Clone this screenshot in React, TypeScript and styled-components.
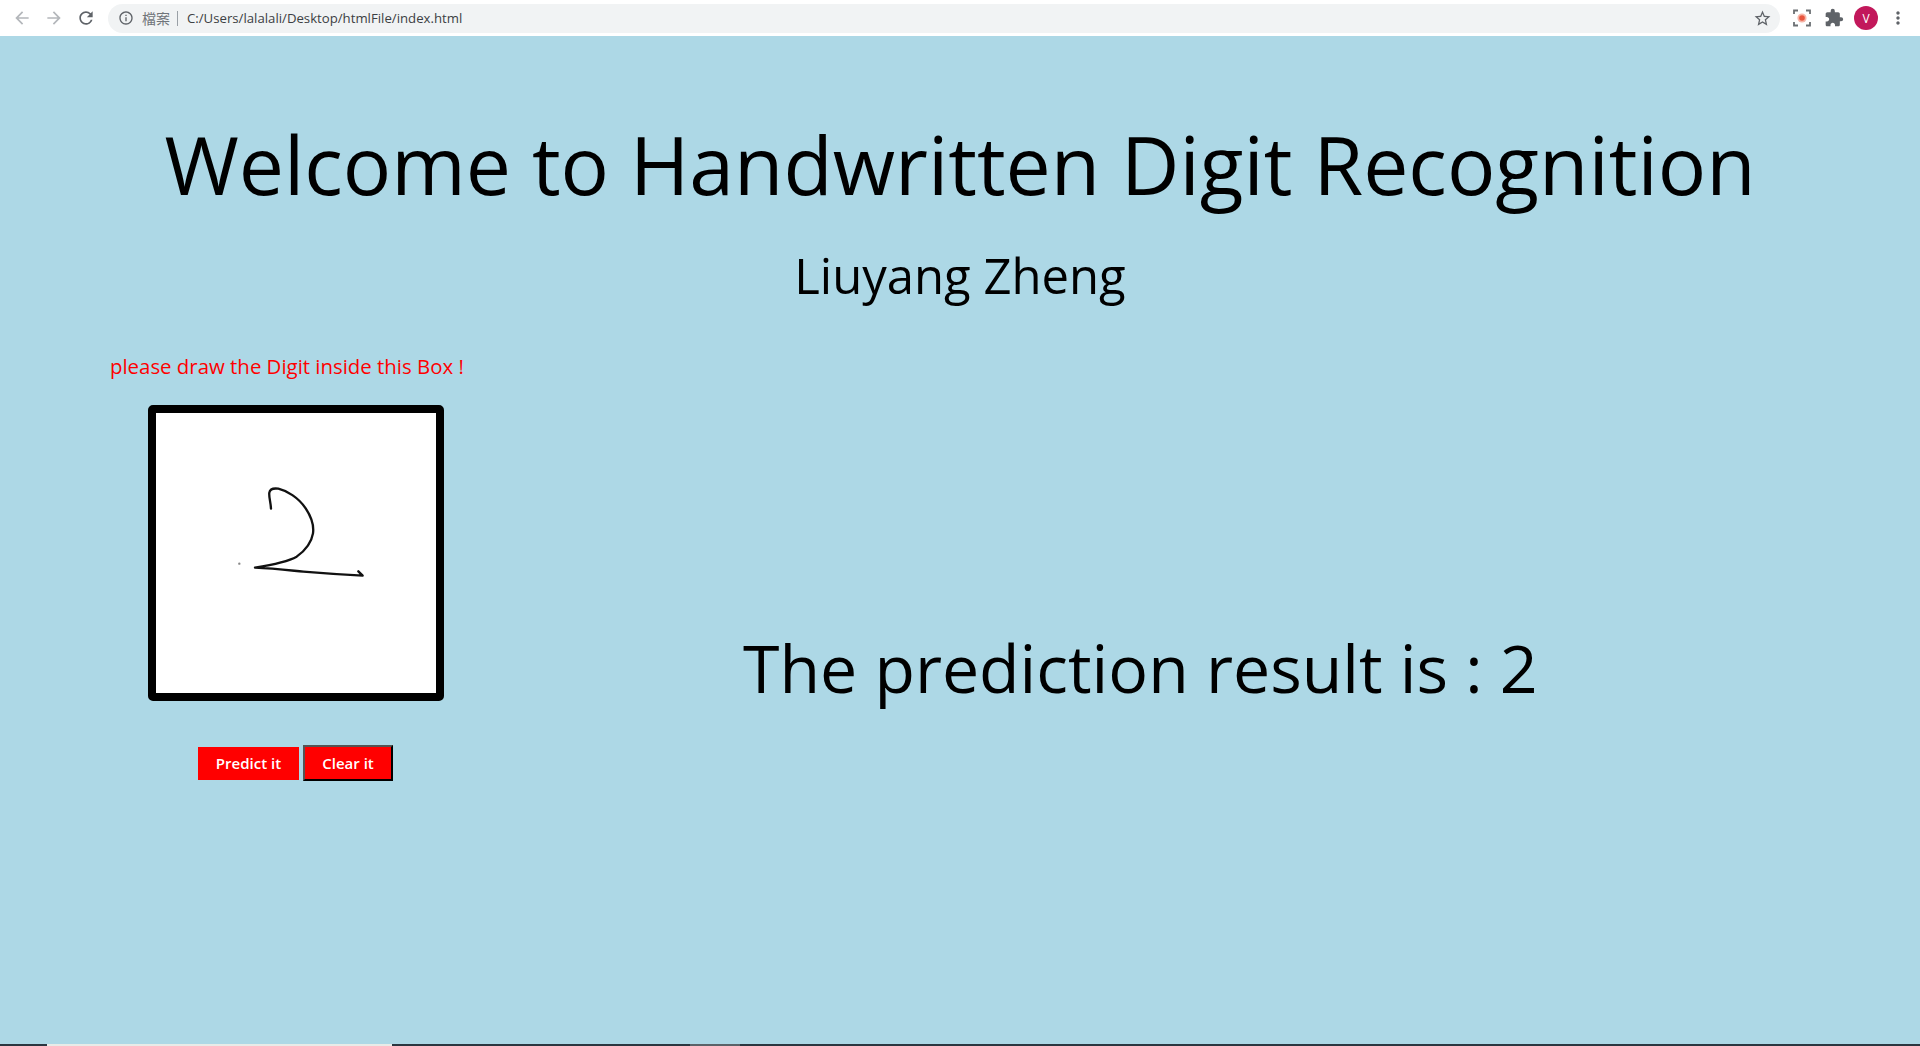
import React from 'react';
import styled, { createGlobalStyle } from 'styled-components';
import { MdArrowBack, MdArrowForward, MdRefresh, MdInfoOutline, MdStarBorder, MdExtension, MdMoreVert } from 'react-icons/md';

const comic = `'Comic Sans MS', 'Open Sans', sans-serif`;

const GlobalStyle = createGlobalStyle`
  html, body {
    margin: 0;
    padding: 0;
    background: #add8e6;
  }
`;

const Page = styled.div`
  width: 1920px;
  height: 1046px;
  overflow: hidden;
  display: flex;
  flex-direction: column;
  background: #add8e6;
  font-family: ${comic};
`;

// --- browser chrome ---
const Toolbar = styled.header`
  height: 36px;
  flex: none;
  display: flex;
  align-items: center;
  background: #fff;
  padding: 0 6px 0 6px;
  box-sizing: border-box;
`;

const NavIcon = styled.span<{ $dim?: boolean }>`
  width: 32px;
  height: 32px;
  display: flex;
  align-items: center;
  justify-content: center;
  font-size: 20px;
  color: ${({ $dim }) => ($dim ? '#b4b7bb' : '#5f6368')};
`;

const AddressBar = styled.div`
  flex: 1;
  height: 29px;
  margin: 0 12px 0 6px;
  padding: 0 8px 0 10px;
  display: flex;
  align-items: center;
  background: #f1f3f4;
  border-radius: 15px;
  font-family: 'Open Sans', sans-serif;
`;

const InfoIcon = styled.span`
  display: flex;
  font-size: 16px;
  color: #5f6368;
  margin-right: 8px;
`;

const Scheme = styled.span`
  font-family: 'Noto Sans CJK TC', sans-serif;
  font-size: 14px;
  color: #70757a;
  padding-right: 7px;
  border-right: 1px solid #9aa0a6;
  line-height: 15px;
  margin-right: 9px;
`;

const Url = styled.span`
  font-size: 13.2px;
  color: #3c4043;
  flex: 1;
`;

const StarIcon = styled.span`
  display: flex;
  font-size: 19px;
  color: #5f6368;
`;

const Avatar = styled.span`
  width: 24px;
  height: 24px;
  margin: 0 4px;
  border-radius: 50%;
  background: #c2185b;
  color: #fff;
  font: 12px 'Open Sans', sans-serif;
  display: flex;
  align-items: center;
  justify-content: center;
`;

// --- page content ---
const Main = styled.main`
  flex: 1;
  min-height: 0;
`;

const Title = styled.h1`
  margin: 0;
  padding-top: 83px;
  text-align: center;
  font-size: 80.5px;
  line-height: 90px;
  font-weight: 400;
  color: #000;
`;

const Author = styled.h2`
  margin: 36px 0 0;
  text-align: center;
  font-size: 49px;
  line-height: 60px;
  font-weight: 400;
  color: #000;
`;

const Columns = styled.div`
  display: grid;
  grid-template-columns: 592px 1fr;
  margin-top: 47px;
`;

const DrawColumn = styled.section`
  padding-left: 110px;
`;

const Hint = styled.p`
  margin: 0;
  font-size: 20.4px;
  line-height: 28px;
  white-space: nowrap;
  color: #f00;
`;

const Board = styled.div`
  width: 280px;
  height: 280px;
  margin: 25px 0 0 38px;
  border: 8px solid #000;
  border-radius: 5px;
  background: #fff;
`;

const Buttons = styled.div`
  display: flex;
  align-items: center;
  gap: 4px;
  margin: 44px 0 0 88px;
`;

const ActionButton = styled.button<{ $raised?: boolean }>`
  height: ${({ $raised }) => ($raised ? '36px' : '33px')};
  width: ${({ $raised }) => ($raised ? '90px' : '101px')};
  padding: 0;
  border: ${({ $raised }) => ($raised ? '2px outset #555' : 'none')};
  background: #f00;
  color: #fff;
  font-family: ${comic};
  font-size: 15px;
  font-weight: 600;
`;

const ResultColumn = styled.section`
  padding-top: 270px;
  padding-left: 151px;
`;

const Result = styled.div`
  font-size: 66.2px;
  line-height: 90px;
  color: #000;
`;

const BottomStrip = styled.footer`
  height: 2px;
  flex: none;
  display: flex;
  background: #2a3640;
`;

const StripPart = styled.span<{ $start: number; $width: number; $color: string }>`
  margin-left: ${({ $start }) => $start}px;
  width: ${({ $width }) => $width}px;
  background: ${({ $color }) => $color};
`;

const CaptureSvg = styled.svg`
  margin-right: 6px;
  flex: none;
`;

function Digit() {
  return (
    <svg width="280" height="280" viewBox="48 39 840 840" fill="none">
      <path
        d="M393 326 C392 305 386 290 388 278 C390 266 400 264 415 266 C440 272 475 292 497 325 C515 352 522 378 519 400 C514 430 495 452 470 470 C445 484 400 494 345 503 C400 505 440 510 490 515 C550 520 610 524 668 527 L655 514"
        stroke="#111"
        strokeWidth="7"
        strokeLinecap="round"
        strokeLinejoin="round"
      />
      <circle cx="298" cy="491" r="3.5" fill="#888" />
    </svg>
  );
}

function CaptureIcon() {
  return (
    <CaptureSvg width="20" height="20" viewBox="0 0 20 20" fill="none">
      <path d="M2 6V2.5H6M14 2.5H18V6M18 14V17.5H14M6 17.5H2V14" stroke="#6b6f73" strokeWidth="1.8" />
      <circle cx="10" cy="10" r="4.6" fill="#f6b5a8" />
      <circle cx="10" cy="10" r="2.8" fill="#e8553e" />
    </CaptureSvg>
  );
}

export default function App() {
  return (
    <Page>
      <GlobalStyle />
      <Toolbar>
        <NavIcon $dim><MdArrowBack /></NavIcon>
        <NavIcon $dim><MdArrowForward /></NavIcon>
        <NavIcon><MdRefresh /></NavIcon>
        <AddressBar>
          <InfoIcon><MdInfoOutline /></InfoIcon>
          <Scheme>檔案</Scheme>
          <Url>C:/Users/lalalali/Desktop/htmlFile/index.html</Url>
          <StarIcon><MdStarBorder /></StarIcon>
        </AddressBar>
        <CaptureIcon />
        <NavIcon><MdExtension /></NavIcon>
        <Avatar>V</Avatar>
        <NavIcon><MdMoreVert /></NavIcon>
      </Toolbar>
      <Main>
        <Title>Welcome to Handwritten Digit Recognition</Title>
        <Author>Liuyang Zheng</Author>
        <Columns>
          <DrawColumn>
            <Hint>please draw the Digit inside this Box !</Hint>
            <Board><Digit /></Board>
            <Buttons>
              <ActionButton>Predict it</ActionButton>
              <ActionButton $raised>Clear it</ActionButton>
            </Buttons>
          </DrawColumn>
          <ResultColumn>
            <Result>The prediction result is : 2</Result>
          </ResultColumn>
        </Columns>
      </Main>
      <BottomStrip>
        <StripPart $start={47} $width={345} $color="#e8ebe8" />
        <StripPart $start={298} $width={50} $color="#5a6268" />
      </BottomStrip>
    </Page>
  );
}
